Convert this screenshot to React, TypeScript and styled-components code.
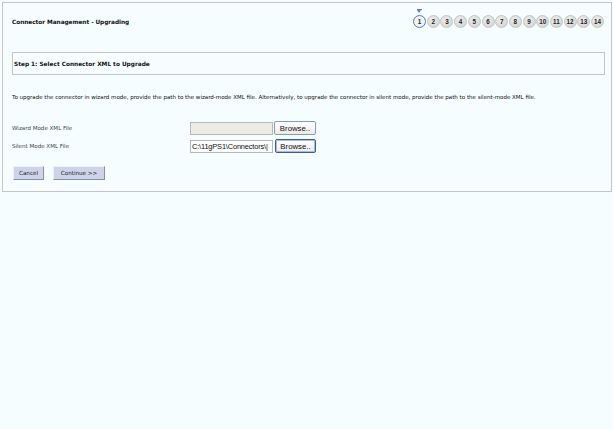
import React from "react"
import styled, { createGlobalStyle } from "styled-components"

const GlobalStyle = createGlobalStyle`
  html, body {
    margin: 0;
    padding: 0;
    background: #f5fdfe;
    font-family: "DejaVu Sans", "Liberation Sans", sans-serif;
    color: #111;
  }
`

const Page = styled.div`
  width: 613px;
  height: 429px;
  padding: 2px 2px 0 2px;
  box-sizing: border-box;
  background: #f5fdfe;
`

const Panel = styled.div`
  border: 1px solid #c6c6c6;
  padding: 12px 6px 11px 9px;
  width: 610px;
  box-sizing: border-box;
`

const Header = styled.div`
  display: flex;
  align-items: center;
  justify-content: space-between;
  height: 13px;
`

const Title = styled.div`
  font-size: 5.8px;
  font-weight: bold;
  letter-spacing: -0.05px;
`

const Steps = styled.div`
  display: flex;
  gap: 0.7px;
  padding-right: 1px;
`

const Step = styled.div<{ $current?: boolean }>`
  position: relative;
  width: 13px;
  height: 13px;
  box-sizing: border-box;
  border-radius: 50%;
  display: flex;
  align-items: center;
  justify-content: center;
  font-family: "Liberation Sans", Arial, sans-serif;
  font-size: 6.3px;
  font-weight: bold;
  color: #222;
  background: ${(p) => (p.$current ? "#eef1f6" : "radial-gradient(circle at 40% 35%, #eeeeee, #cfcfcf)")};
  border: ${(p) => (p.$current ? "1.4px solid #5a7aa8" : "1px solid #c4c4c4")};
`

const Marker = styled.div`
  position: absolute;
  top: -6px;
  left: 50%;
  margin-left: -2.5px;
  width: 0;
  height: 0;
  border-left: 2.5px solid transparent;
  border-right: 2.5px solid transparent;
  border-top: 3px solid #5a7ad0;
  &::before {
    content: "";
    position: absolute;
    top: -4px;
    left: -2.5px;
    width: 5px;
    height: 1px;
    background: #5a7ad0;
  }
`

const StepBox = styled.div`
  margin-top: 24px;
  height: 23px;
  border: 1px solid #c6c6c6;
  box-sizing: border-box;
  display: flex;
  align-items: center;
  padding-left: 1px;
  font-size: 5.8px;
  font-weight: bold;
`

const Intro = styled.p`
  margin: 17px 0 0 0;
  line-height: 10px;
  font-size: 5.52px;
  white-space: nowrap;
`

const Form = styled.div`
  margin-top: 19px;
  display: flex;
  flex-direction: column;
  gap: 4px;
`

const Row = styled.div`
  display: flex;
  align-items: center;
  height: 14px;
`

const Label = styled.div`
  width: 178px;
  font-size: 5.55px;
  color: #444;
`

const FileField = styled.div<{ $disabled?: boolean }>`
  width: 83px;
  height: 13px;
  box-sizing: border-box;
  border: 1px solid #b8b8b8;
  background: ${(p) => (p.$disabled ? "#ecebe5" : "#fbfdfd")};
  font-family: "Liberation Sans", Arial, sans-serif;
  font-size: 7.4px;
  letter-spacing: -0.15px;
  line-height: 11px;
  padding-left: 1px;
  white-space: nowrap;
`

const BrowseButton = styled.button<{ $focused?: boolean }>`
  margin-left: ${(p) => (p.$focused ? "2px" : "1px")};
  width: ${(p) => (p.$focused ? "41px" : "42px")};
  height: 14px;
  box-sizing: border-box;
  padding: 0;
  border: 1px solid ${(p) => (p.$focused ? "#3c5a94" : "#7f9db9")};
  box-shadow: ${(p) => (p.$focused ? "inset 0 0 0 1px #a9bde0" : "none")};
  border-radius: 2px;
  background: linear-gradient(#ffffff, #ecebe6);
  font-family: "Liberation Sans", Arial, sans-serif;
  font-size: 7.8px;
  color: #111;
`

const Actions = styled.div`
  margin-top: 13px;
  display: flex;
  gap: 9px;
  padding-left: 1px;
`

const ActionButton = styled.button<{ $w: number }>`
  width: ${(p) => p.$w}px;
  height: 14px;
  box-sizing: border-box;
  padding: 0;
  background: #cdd4ea;
  border: 1px solid;
  border-color: #eef0f8 #8a8f9e #8a8f9e #eef0f8;
  font-family: "DejaVu Sans", sans-serif;
  font-size: 5.6px;
  color: #222;
`

const steps = Array.from({ length: 14 }, (_, i) => i + 1)

export default function App() {
  return (
    <Page>
      <GlobalStyle />
      <Panel>
        <Header>
          <Title>Connector Management - Upgrading</Title>
          <Steps>
            {steps.map((n) => (
              <Step key={n} $current={n === 1}>
                {n === 1 && <Marker />}
                {n}
              </Step>
            ))}
          </Steps>
        </Header>
        <StepBox>Step 1: Select Connector XML to Upgrade</StepBox>
        <Intro>
          To upgrade the connector in wizard mode, provide the path to the wizard-mode XML file. Alternatively, to
          upgrade the connector in silent mode, provide the path to the silent-mode XML file.
        </Intro>
        <Form>
          <Row>
            <Label>Wizard Mode XML File</Label>
            <FileField $disabled />
            <BrowseButton>Browse..</BrowseButton>
          </Row>
          <Row>
            <Label>Silent Mode XML File</Label>
            <FileField>C:\11gPS1\Connectors\|</FileField>
            <BrowseButton $focused>Browse..</BrowseButton>
          </Row>
        </Form>
        <Actions>
          <ActionButton $w={31}>Cancel</ActionButton>
          <ActionButton $w={52}>Continue &gt;&gt;</ActionButton>
        </Actions>
      </Panel>
    </Page>
  )
}
